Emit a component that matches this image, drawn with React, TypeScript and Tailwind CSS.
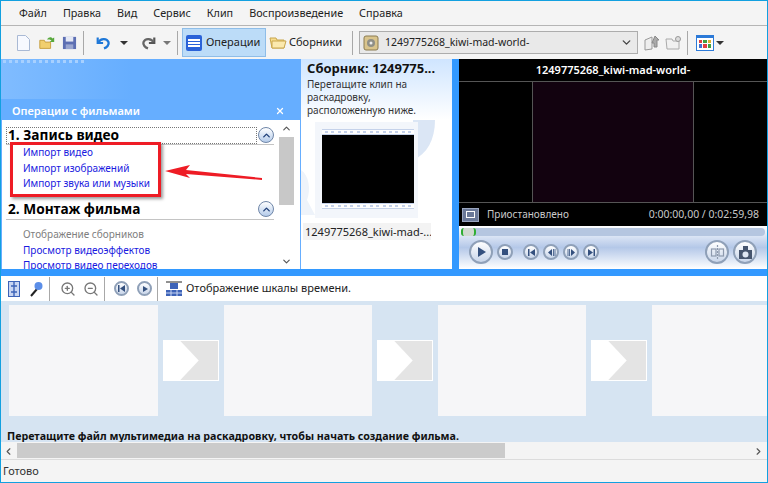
import React from "react";
import { ChevronUp, ChevronDown, ChevronLeft, ChevronRight, X, ZoomIn, ZoomOut } from "lucide-react";

const font = { fontFamily: '"Noto Sans", "Open Sans", sans-serif' };

const Sep = () => <div className="w-px h-[24px] bg-[#a8a8a8] mx-[3px] shrink-0" />;

function Collapse() {
  return (
    <div className="w-[16px] h-[16px] rounded-full border border-[#6f86a8] bg-gradient-to-b from-white to-[#b4cbea] flex items-center justify-center shrink-0">
      <ChevronUp size={11} strokeWidth={3} className="text-[#1f3f78]" />
    </div>
  );
}

function RoundBtn({ size, children }: { size: number; children: React.ReactNode }) {
  return (
    <div
      className="rounded-full border-2 border-[#8fa0b8] bg-gradient-to-b from-white to-[#c9d6ea] flex items-center justify-center shrink-0"
      style={{ width: size, height: size }}
    >
      {children}
    </div>
  );
}

// transport glyphs
const Glyph = ({ d }: { d: string }) => (
  <svg width="9" height="9" viewBox="0 0 9 9">
    <path d={d} fill="#34507e" />
  </svg>
);
const PREV = "M1 1H2.5V8H1ZM8 1V8L3 4.5Z";
const BACK = "M1 4.5L5 1V8ZM6 1H6.8V8H6ZM7.6 1H8.4V8H7.6Z";
const FWD = "M.6 1H1.4V8H.6ZM2.2 1H3V8H2.2ZM4 1L8 4.5L4 8Z";
const NEXT = "M1 1L6 4.5L1 8ZM6.5 1H8V8H6.5Z";

function Filmstrip() {
  return (
    <div className="h-[6px] bg-white border-y border-[#c5d2ea] flex items-center justify-around px-[1px]">
      {Array.from({ length: 14 }).map((_, i) => (
        <div key={i} className="w-[3px] h-[2px] bg-[#c3d0ea]" />
      ))}
    </div>
  );
}

function Frame({ w }: { w: number }) {
  return <div className="h-[111px] bg-[#f6f6f8] shrink-0" style={{ width: w }} />;
}

function Transition() {
  return (
    <div className="w-[56px] h-[41px] mt-[35px] bg-[#e4e4e4] border border-white shrink-0 overflow-hidden">
      <svg viewBox="0 0 56 40" preserveAspectRatio="none" className="w-full h-full">
        <path d="M0 0H17L36 20L17 40H0Z" fill="#ffffff" />
      </svg>
    </div>
  );
}

function Storyboard() {
  return (
    <div className="h-[141px] shrink-0 bg-[#d6e4f2] overflow-hidden relative">
      <div className="flex items-start gap-[5px] pl-[8px] pt-[4px]">
        <Frame w={149} />
        <Transition />
        <Frame w={148} />
        <Transition />
        <Frame w={148} />
        <Transition />
        <Frame w={116} />
      </div>
      <div className="absolute left-[6px] bottom-[-2px] text-[10.7px] font-bold text-[#111] leading-[16px] whitespace-nowrap">
        Перетащите файл мультимедиа на раскадровку, чтобы начать создание фильма.
      </div>
    </div>
  );
}

export default function App() {
  return (
    <div className="w-[768px] h-[483px] border border-[#12a0e0] bg-[#f4f4f4] flex flex-col overflow-hidden relative text-[#222]" style={font}>
      {/* menu */}
      <div className="h-[25px] shrink-0 border-b border-[#b5b5b5] flex items-center gap-[16px] pl-[18px] text-[10.8px]">
        {["Файл", "Правка", "Вид", "Сервис", "Клип", "Воспроизведение", "Справка"].map((m) => (
          <span key={m}>{m}</span>
        ))}
      </div>

      {/* toolbar */}
      <div className="h-[33px] shrink-0 flex items-center pl-[15px] text-[11px]">
        <svg width="15" height="18" viewBox="0 0 15 18" className="mr-[7px] shrink-0">
          <path d="M1.5 1.5H9.5L13.5 5.5V16.5H1.5Z" fill="#f7f9ff" stroke="#a9b9d4" />
        </svg>
        <svg width="18" height="18" viewBox="0 0 20 18" className="mr-[6px] shrink-0">
          <path d="M2 6H7L8 8H14V15H2Z" fill="#f1cf6f" stroke="#c49c3a" />
          <path d="M10 5C12 2 15 2 16 4L18 3V8H13L15 6C14 5 12 5 10 5Z" fill="#58a83c" />
        </svg>
        <svg width="15" height="15" viewBox="0 0 16 16" className="mr-[3px] shrink-0">
          <path d="M1 2H15V15H1Z" fill="#5d6fb3" />
          <path d="M4 2H12V7H4Z" fill="#e4e8f5" />
          <path d="M4 10H12V15H4Z" fill="#9aa6d0" />
        </svg>
        <Sep />
        <svg width="18" height="18" viewBox="0 0 20 18" className="ml-[8px] mr-[7px] shrink-0" fill="none">
          <path d="M3 3V9H9" stroke="#1f78d8" strokeWidth="2.4" />
          <path d="M4 8C6 4 13 3 15 8C16 11 13 14 10 15" stroke="#1f78d8" strokeWidth="2.6" />
        </svg>
        <div className="w-0 h-0 border-x-[4px] border-x-transparent border-t-[4px] border-t-[#333] mr-[11px] shrink-0" />
        <svg width="18" height="18" viewBox="0 0 20 18" className="mr-[6px] shrink-0" fill="none">
          <path d="M17 3V9H11" stroke="#555" strokeWidth="2.4" />
          <path d="M16 8C14 4 7 3 5 8C4 11 7 14 10 15" stroke="#666" strokeWidth="2.6" />
        </svg>
        <div className="w-0 h-0 border-x-[4px] border-x-transparent border-t-[4px] border-t-[#777] mr-[3px] shrink-0" />
        <Sep />
        <div className="h-[29px] w-[84px] ml-[1px] shrink-0 bg-[#bcdcf8] border border-[#8ebde8] flex items-center gap-[4px] pl-[3px]">
          <div className="w-[16px] h-[16px] rounded-[2px] bg-[#2a62d8] flex flex-col justify-center gap-[1px] px-[2px]">
            <div className="h-[2px] bg-white" />
            <div className="h-[2px] bg-white" />
            <div className="h-[2px] bg-white" />
          </div>
          <span>Операции</span>
        </div>
        <svg width="18" height="16" viewBox="0 0 18 16" className="ml-[3px] mr-[2px] shrink-0">
          <path d="M1 3H7L8 5H15V13H3Z" fill="#f6dc8e" stroke="#c9a64c" />
          <path d="M3 6H17L15 13H3Z" fill="#fbe9ae" stroke="#c9a64c" />
        </svg>
        <span className="w-[55px] whitespace-nowrap shrink-0">Сборники</span>
        <div className="ml-[5px]"><Sep /></div>
        <div className="ml-[3px] w-[279px] h-[23px] shrink-0 bg-[#e9e9e9] border border-[#acacac] flex items-center pl-[3px] pr-[4px] gap-[6px]">
          <svg width="16" height="16" viewBox="0 0 16 16" className="shrink-0">
            <rect x="1" y="1" width="14" height="14" rx="2" fill="#d9c48c" stroke="#8a7a50" />
            <circle cx="8" cy="8" r="4" fill="#8f8f86" />
            <circle cx="8" cy="8" r="1.5" fill="#eee" />
          </svg>
          <span className="flex-1 truncate text-[10.5px]">1249775268_kiwi-mad-world-</span>
          <ChevronDown size={13} strokeWidth={2.5} className="text-[#444]" />
        </div>
        <svg width="18" height="18" viewBox="0 0 18 18" className="ml-[5px] shrink-0">
          <path d="M2 6L9 3V15L2 16Z" fill="#eee" stroke="#999" />
          <path d="M9 9L12 2L16 6H14V13H11V9Z" fill="#aaa" stroke="#888" />
        </svg>
        <svg width="18" height="16" viewBox="0 0 18 16" className="ml-[4px] shrink-0">
          <path d="M1 4H7L8 6H14V14H2Z" fill="#f1f1f1" stroke="#aaa" />
          <circle cx="13" cy="4" r="2.5" fill="#ddd" stroke="#999" />
        </svg>
        <div className="ml-[1px]"><Sep /></div>
        <div className="ml-[5px] w-[18px] h-[16px] shrink-0 bg-white border border-[#2c7ad8] border-t-[3px] grid grid-cols-3 gap-[1px] p-[2px]">
          {["#e04040", "#40a040", "#e0b030", "#4070d0", "#e04040", "#40a040"].map((c, i) => (
            <div key={i} style={{ background: c }} />
          ))}
        </div>
        <div className="ml-[2px] w-0 h-0 border-x-[4px] border-x-transparent border-t-[4px] border-t-[#333] shrink-0" />
      </div>

      {/* panes */}
      <div className="h-[217px] shrink-0 flex bg-[#3399ff] pb-[7px]">
        {/* tasks */}
        <div className="w-[300px] shrink-0 bg-[#66aeff] flex flex-col">
          <div className="h-[61px] relative flex items-end justify-between pl-[11px] pr-[16px] pb-[1px] text-white text-[11px] font-semibold shrink-0 bg-gradient-to-r from-[#80bcff] to-[#66aeff] bg-[length:130px_40px] bg-no-repeat">
            <div className="absolute left-0 top-[1px] flex gap-[3px] pl-[2px]">
              {Array.from({ length: 14 }).map((_, i) => (
                <div key={i} className="w-[3px] h-[3px] bg-[#a7d0ff]" />
              ))}
            </div>
            <span>Операции с фильмами</span>
            <X size={10} strokeWidth={3} className="mb-[3px]" />
          </div>
          <div className="h-[149px] mx-[1px] bg-white flex overflow-hidden">
            <div className="flex-1 pl-[4px] pr-[5px] pt-[6px] overflow-hidden">
              <div className="flex items-center gap-[1px] h-[19px] border-b border-[#c4c4c4]">
                <div className="flex-1 h-[17px] border border-dotted border-[#777] text-[13.7px] font-bold leading-[14px] text-black pl-[1px] whitespace-nowrap">
                  1. Запись видео
                </div>
                <Collapse />
              </div>
              <div className="text-[10px] leading-[15.5px] text-[#1a1ae0] pl-[17px] h-[55px]">
                <div>Импорт видео</div>
                <div>Импорт изображений</div>
                <div>Импорт звука или музыки</div>
              </div>
              <div className="flex items-center justify-between h-[20px] pb-[1px] border-b border-[#c4c4c4] text-[13.7px] font-bold text-black">
                <span className="pl-[2px]">2. Монтаж фильма</span>
                <Collapse />
              </div>
              <div className="text-[10px] leading-[15.5px] text-[#1a1ae0] pl-[17px] pt-[7px] whitespace-nowrap">
                <div className="text-[#808080]">Отображение сборников</div>
                <div>Просмотр видеоэффектов</div>
                <div>Просмотр видео переходов</div>
              </div>
            </div>
            <div className="w-[15px] mr-[6px] bg-white flex flex-col items-center justify-between shrink-0 pt-[3px] pb-[2px] relative">
              <ChevronUp size={11} strokeWidth={2.5} className="text-[#555]" />
              <div className="absolute top-[17px] left-0 w-[15px] h-[68px] bg-[#c8c8c8]" />
              <ChevronDown size={11} strokeWidth={2.5} className="text-[#555]" />
            </div>
          </div>
        </div>

        {/* collection */}
        <div className="w-[151px] shrink-0 bg-white flex flex-col overflow-hidden">
          <div className="bg-gradient-to-b from-[#cfe5ff] to-white h-[61px] pl-[6px] pt-[1px] shrink-0">
            <div className="text-[13px] font-bold leading-[17px] text-[#111] whitespace-nowrap">Сборник: 1249775...</div>
            <div className="text-[10px] leading-[13px] text-[#333] mt-[1px]">Перетащите клип на<br />раскадровку,<br />расположенную ниже.</div>
          </div>
          <div className="flex-1 relative pt-[2px]">
            <svg className="absolute left-0 top-0" width="151" height="110" viewBox="0 0 151 110">
              <path d="M112 0H134C134 20 126 34 112 40Z" fill="#dbe6f5" />
              <path d="M0 50C8 55 10 70 6 80L14 95H0Z" fill="#eef3fa" />
            </svg>
            <div className="relative ml-[14px] w-[103px] h-[96px] bg-[#f3f6fb] pl-[7px] pt-[7px]">
              <div className="w-[92px]">
                <Filmstrip />
                <div className="h-[68px] bg-black" />
                <Filmstrip />
              </div>
            </div>
            <div className="relative mt-[5px] ml-[2px] w-[128px] h-[17px] bg-[#f3f3f3] text-[11px] leading-[17px] pl-[2px] whitespace-nowrap overflow-hidden text-[#222]">
              1249775268_kiwi-mad-...
            </div>
          </div>
        </div>

        <div className="w-[7px] shrink-0" />

        {/* preview */}
        <div className="flex-1 flex flex-col bg-black text-white">
          <div className="h-[23px] border-b border-[#555] shrink-0 text-center text-[11px] font-semibold leading-[22px]">
            1249775268_kiwi-mad-world-
          </div>
          <div className="h-[121px] shrink-0 flex justify-center border-b border-[#555]">
            <div className="w-[162px] ml-[-1px] h-full border-x border-[#555] bg-[#12020f]" />
          </div>
          <div className="h-[23px] shrink-0 flex items-center pl-[3px] pr-[8px] text-[10px] text-[#c9c9c9]">
            <div className="w-[17px] h-[14px] bg-[#6a7898] border border-[#9aa6c0] mr-[8px] flex items-center justify-center">
              <div className="w-[9px] h-[7px] border border-white" />
            </div>
            <span className="flex-1">Приостановлено</span>
            <span className="text-[10.5px]">0:00:00,00 / 0:02:59,98</span>
          </div>
          <div className="flex-1 bg-gradient-to-b from-white via-[#b4c8e8] to-white px-[2px] pt-[2px]">
            <div className="h-[8px] rounded-full bg-[#b5c6e0]">
              <div className="w-[15px] h-[8px] rounded-[3px] bg-[#d0d8d0] border-x-2 border-[#2fae32]" />
            </div>
            <div className="flex items-center mt-[4px] pl-[8px] pr-[8px]">
              <RoundBtn size={24}>
                <div className="w-0 h-0 border-y-[5px] border-y-transparent border-l-[8px] border-l-[#34507e] ml-[2px]" />
              </RoundBtn>
              <div className="ml-[4px]">
                <RoundBtn size={16}><div className="w-[6px] h-[6px] bg-[#34507e]" /></RoundBtn>
              </div>
              <div className="ml-[10px] flex gap-[4px]">
                {[PREV, BACK, FWD, NEXT].map((d) => (
                  <RoundBtn key={d} size={16}>
                    <Glyph d={d} />
                  </RoundBtn>
                ))}
              </div>
              <div className="flex-1" />
              <RoundBtn size={24}>
                <svg width="15" height="15" viewBox="0 0 15 15" fill="none" stroke="#8d99ad" strokeWidth="1.2">
                  <rect x="1.5" y="4" width="4.5" height="7" />
                  <rect x="9" y="4" width="4.5" height="7" />
                  <path d="M7.5 0V15" strokeDasharray="2 1" />
                </svg>
              </RoundBtn>
              <div className="ml-[4px]">
                <RoundBtn size={24}>
                  <svg width="15" height="15" viewBox="0 0 15 15">
                    <rect x="1" y="5" width="13" height="9" fill="#46556e" />
                    <rect x="5" y="1" width="5" height="4" fill="#46556e" />
                    <circle cx="7.5" cy="9.5" r="3" fill="#dfe7f3" />
                  </svg>
                </RoundBtn>
              </div>
            </div>
          </div>
        </div>
      </div>

      {/* timeline toolbar */}
      <div className="h-[25px] shrink-0 bg-white flex items-center pl-[7px] text-[#777]">
        <svg width="12" height="16" viewBox="0 0 12 16" className="shrink-0">
          <rect x="0.5" y="0.5" width="11" height="15" fill="#c8d5f2" stroke="#3d63b8" />
          <path d="M6 1V15M3 5H9M3 11H9" stroke="#3d63b8" strokeWidth="1.4" />
        </svg>
        <svg width="16" height="16" viewBox="0 0 16 16" className="ml-[8px] shrink-0">
          <path d="M9 8L3 15" stroke="#222" strokeWidth="2" />
          <circle cx="10.5" cy="5" r="4" fill="#5b8ee8" />
        </svg>
        <div className="ml-[2px]"><Sep /></div>
        <ZoomIn size={16} className="ml-[7px]" />
        <ZoomOut size={16} className="ml-[7px]" />
        <div className="ml-[2px]"><Sep /></div>
        <div className="ml-[6px]">
          <RoundBtn size={15}><Glyph d={PREV} /></RoundBtn>
        </div>
        <div className="ml-[8px]">
          <RoundBtn size={15}><div className="w-0 h-0 border-y-[3px] border-y-transparent border-l-[5px] border-l-[#34507e] ml-[1px]" /></RoundBtn>
        </div>
        <div className="ml-[2px]"><Sep /></div>
        <svg width="16" height="16" viewBox="0 0 16 16" className="ml-[5px] shrink-0">
          <path d="M0 1H16" stroke="#222" />
          <rect x="4" y="2" width="8" height="6" fill="#3d63b8" />
          <rect x="0" y="9" width="16" height="6" fill="#3d63b8" />
          <path d="M5 9V15M11 9V15M0 12H16" stroke="#c8d5f2" />
        </svg>
        <span className="ml-[4px] text-[11px] text-[#222]">Отображение шкалы времени.</span>
      </div>

      <Storyboard />

      {/* horizontal scrollbar */}
      <div className="h-[17px] shrink-0 mt-[1px] bg-[#f4f4f4] flex items-center justify-between relative border-b border-[#dcdcdc]">
        <ChevronLeft size={11} strokeWidth={2.5} className="text-[#555] ml-[2px]" />
        <div className="absolute left-[16px] top-0 w-[488px] h-[15px] bg-[#cbcbcb]" />
        <ChevronRight size={11} strokeWidth={2.5} className="text-[#555] mr-[3px]" />
      </div>

      {/* status */}
      <div className="flex-1 flex items-center pl-[2px] text-[11px] text-[#333]">Готово</div>

      {/* red annotation */}
      <div className="absolute left-[9px] top-[141px] w-[151px] h-[55px] border-[3px] border-[#ee1c25] shadow-[2px_2px_3px_rgba(0,0,0,0.4)]" />
      <svg className="absolute left-[160px] top-[160px]" width="104" height="24" viewBox="0 0 104 24">
        <path d="M4 10L29 4L25 9L101 17V19L25 13L29 17Z" fill="#ee1c25" />
      </svg>
    </div>
  );
}
